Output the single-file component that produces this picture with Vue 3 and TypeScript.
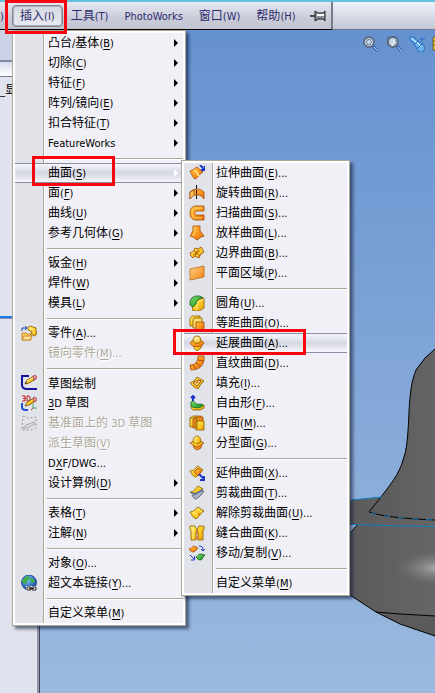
<script setup lang="ts">
interface Shape {
  d: string
  fill?: string
  stroke?: string
  width?: number
  dash?: string
}

interface MenuEntry {
  label?: string
  icon?: string
  more?: boolean
  off?: boolean
  active?: boolean
  children?: MenuEntry[]
}

interface Part {
  text: string
  latin: boolean
  key: boolean
}

const gold = 'url(#gold)'
const amber = 'url(#amber)'
const brown = '#a5480a'
const olive = '#8a5a00'

const icons: Record<string, Shape[]> = {
  part: [
    { d: 'M1 6V3h4M4 1l2 2-2 2', stroke: '#1a3fb0', width: 1 },
    { d: 'M7 2l3-1 2 1 3 1v3l1 3-3 2-3-2 1-2-4-2z', fill: gold, stroke: olive },
    { d: 'M9 3l4 2-1 2 2 1', stroke: '#fff2a0' },
    { d: 'M1 8h4l1 1h4v6H1z', fill: '#f9cf6a', stroke: '#c07b10' },
    { d: 'M1 15l2-4h8l-2 4z', fill: '#ffe39a', stroke: '#c07b10' },
  ],
  sketch: [
    { d: 'M8 1H1v9c0 3 2 4 5 4h10', stroke: '#14149c', width: 2 },
    { d: 'M4 9l2-4 7-4 2 3-7 4z', fill: gold, stroke: '#6b4a10' },
    { d: 'M6 6l7-4', stroke: '#fff3a0' },
    { d: 'M12 1l2-1 2 2-1 2-2 1z', fill: '#ee8f96', stroke: '#a84650' },
    { d: 'M4 9l1-2 1 1z', fill: '#222' },
  ],
  sketch3d: [
    { d: 'M1 1h3v5H1M2 3.5h2M6 1v5h2l1-1V2L8 1z', stroke: '#c01818', width: 1 },
    { d: 'M1 8v4c0 2 1 3 4 3h2', stroke: '#1d50c8', width: 2 },
    { d: 'M4 11l2-4 7-4 2 3-7 4z', fill: gold, stroke: '#6b4a10' },
    { d: 'M12 3l2-1 2 2-1 2-2 1z', fill: '#ee8f96', stroke: '#a84650' },
    { d: 'M12 9v4h4', stroke: '#159b3a' },
    { d: 'M12 13l-2 2', stroke: '#c01818' },
  ],
  plane: [
    { d: 'M2 1l5 2 8-1v11l-6 2H1z', stroke: '#9a9a9a', width: 1, dash: '2 2' },
    { d: 'M2 13l3-3 8-3 1 2-8 4z', fill: '#dcdcdc', stroke: '#9a9a9a' },
  ],
  globe: [
    { d: 'M8 0a7.5 7.5 0 1 0 0 15A7.5 7.5 0 1 0 8 0z', fill: 'url(#globe)', stroke: '#123b8f' },
    { d: 'M4 2l4-1 1 3-3 2v2L3 9 1 6zM10 3l3 1 1 3-3 1-2-2z', fill: '#3fae49' },
    { d: 'M5 11h11v5H5z', fill: '#eee' },
    { d: 'M6 12h4v3H6zM11 12h4v3h-4zM8 13.5h5', stroke: '#222', width: 1 },
  ],
  extrude: [
    { d: 'M1 6c3-1 4-2 7-4l6 5c-3 1-4 5-8 7-2-1-3-4-5-8z', fill: amber, stroke: brown },
    { d: 'M5 5c3 2 4 4 5 6', stroke: '#ffe27a', width: 2 },
    { d: 'M11 0l4 4M12 5h3.500V1', stroke: '#1836c8', width: 2 },
  ],
  revolve: [
    { d: 'M1 14V7c4-4 10-4 14 0v7c-2-3-4-4-5-4H6c-2 0-4 1-5 4z', fill: amber, stroke: brown },
    { d: 'M1 14V7l4-2v5z', fill: '#ffc95a', stroke: brown },
    { d: 'M7.500 0v15', stroke: '#111', width: 1, dash: '4 1' },
  ],
  sweep: [
    { d: 'M15 1H7C3 1 1 4 1 8s2 7 6 7h8v-5H8c-3 0-3-4 0-4h7z', fill: amber, stroke: brown },
    { d: 'M13 3H7C4 3 3 5 3 8s1 5 4 5h6', stroke: '#ffd35a', width: 1 },
  ],
  loft: [
    { d: 'M4 1h7v5l4 5-3 1-4 3-4-3-3-1 3-5z', fill: amber, stroke: brown },
    { d: 'M6 2v5l-2 4', stroke: '#ffe08a' },
  ],
  boundary: [
    { d: 'M1 8l4-2 1-3 3 1 3-2 3 5-3 2-2 4-4-2-2 2-2-2z', fill: gold, stroke: brown },
    { d: 'M5 6l6 5M9 4l-3 7M4 10l8-5', stroke: '#a04a00' },
    { d: 'M7 5l1 1M4 9l1-1M11 5l1 2M8 10l1 1', stroke: '#fff07a', width: 1 },
  ],
  planar: [{ d: 'M1 4l14-3v11L1 15z', fill: 'url(#sheet)', stroke: '#b86a18' }],
  fillet: [
    { d: 'M3 10l5-5 7-2v10l-5 3H4z', fill: gold, stroke: olive },
    { d: 'M8 15V8l7-4', stroke: '#fff3a0' },
    { d: 'M1 8c0-4 3-7 7-7h3l3 2c-4 0-6 2-7 6l-3 3-3-2z', fill: 'url(#green)', stroke: '#14601c' },
  ],
  offset: [
    { d: 'M1 3l2-2h8v8L9 11H1z', fill: gold, stroke: olive },
    { d: 'M4 5l1-2h8v8l-1 2H4z', fill: '#ffd96a', stroke: olive },
    { d: 'M7 7h8v8H7z', fill: amber, stroke: brown },
  ],
  radiate: [
    { d: 'M4 9h9l-1 4-4 3-3-3z', fill: gold, stroke: olive },
    { d: 'M1 8c2-4 12-4 14 0-2 5-12 5-14 0z', fill: amber, stroke: brown },
    { d: 'M4 6c0-3 1-5 4-5s4 2 4 5c-1 3-7 3-8 0z', fill: 'url(#ball)', stroke: olive },
  ],
  ruled: [
    { d: 'M9 1h6v4c-1 6-5 10-13 10l-1-5c5 0 8-3 8-9z', fill: amber, stroke: brown },
    { d: 'M9 5l6 1M7 8l5 4M4 10l3 4', stroke: '#a8520c', width: 1 },
  ],
  fill: [
    { d: 'M1 8l4-2 3-4 7 4-3 3-3 5-4-2z', fill: gold, stroke: olive },
    { d: 'M4 8l5-3 3 1-4 5z', fill: '#fff0a0', stroke: '#6b3000' },
    { d: 'M6 8l3-2 1 1-3 2z', fill: '#e86a10' },
  ],
  freeform: [
    { d: 'M4 6V1M2 3l2-2 2 2', stroke: '#1836c8', width: 2 },
    { d: 'M2 11l13-1v3l-4 2H4l-2-2z', fill: gold, stroke: olive },
    { d: 'M2 7c2-2 4 0 5 2 3 1 5-1 7 1 0 3-10 4-12 1z', fill: 'url(#green)', stroke: '#14601c' },
  ],
  mid: [
    { d: 'M1 3l3-2h8v8l-3 3H1z', fill: gold, stroke: olive },
    { d: 'M4 4l2-2h8v9l-2 2H4z', fill: '#e88a1a', stroke: brown },
    { d: 'M7 6h8v9H7z', fill: gold, stroke: olive },
    { d: 'M1 3h6l1 3v8', stroke: olive },
  ],
  parting: [
    { d: 'M4 9h9l-1 4-4 2-3-2z', fill: amber, stroke: brown },
    { d: 'M1 8l6-3h2l6 3-6 4H7z', fill: gold, stroke: brown },
    { d: 'M4 7c0-4 2-6 4-6s4 2 4 6c-2 2-6 2-8 0z', fill: gold, stroke: olive },
    { d: 'M7 2v7', stroke: '#fff6a0' },
  ],
  extend: [
    { d: 'M1 6c4 0 5-3 8-5l5 4c-3 1-4 5-7 7-3 0-4-3-6-6z', fill: gold, stroke: olive },
    { d: 'M5 7l4 4 4-5-4-3z', fill: amber, stroke: brown },
    { d: 'M10 9l5 5M15 11v4h-4', stroke: '#2038c8', width: 2 },
  ],
  trim: [
    { d: 'M1 7c4 0 5-3 8-6l5 3c-3 1-4 4-7 5z', fill: gold, stroke: olive },
    { d: 'M3 10c5 0 6-4 12-4-2 3-4 6-8 8-2 0-3-2-4-4z', fill: '#a9b0c0', stroke: '#555b6b' },
    { d: 'M2 8c5 2 7-2 12-3', stroke: '#2864d8', width: 1 },
  ],
  untrim: [
    { d: 'M1 7c4 0 5-3 8-5l6 4c-3 1-5 6-8 8-3-1-4-4-6-7z', fill: gold, stroke: olive },
    { d: 'M4 7c3 1 4 3 4 5M9 3c1 2 2 3 4 4', stroke: '#fff3a0' },
    { d: 'M9 8l3 1-3 4z', fill: '#e08a10' },
  ],
  knit: [
    { d: 'M1 1h5l2 4 2-4h5v3l-1 2v9H9V7L8 6 7 7v8H2V6L1 4z', fill: gold, stroke: olive },
    { d: 'M8 5v10', stroke: '#e02a10', width: 1, dash: '1 1' },
    { d: 'M4 2v12', stroke: '#fff3a0' },
  ],
  move: [
    { d: 'M0 4c2 0 3-2 5-3l4 2c-2 1-2 3-4 4-2 0-4-1-5-3z', fill: amber, stroke: brown },
    { d: 'M7 12c2 0 2-3 4-3l5 1c-2 1-2 4-4 5-2 0-4-1-5-3z', fill: 'url(#green)', stroke: '#14601c' },
    { d: 'M10 1c3 0 4 1 4 4M12 4l2 2 2-2M1 10l4 4M5.500 11v4H2', stroke: '#2038c8', width: 1 },
  ],
  zoomFit: [
    { d: 'M10 10l5 5', stroke: '#3765bc', width: 3 },
    { d: 'M11 11l4 4', stroke: '#b5dcff', width: 1 },
    { d: 'M6 1a5 5 0 1 0 0 10A5 5 0 1 0 6 1z', fill: '#c6d5e6', stroke: '#5d6c84', width: 2 },
    { d: 'M4 4h1M7 4h1M4 8h1M7 8h1M6 3v1M6 8v1M3 6h1M8 6h1', stroke: '#333d4e', width: 1 },
  ],
  zoomArea: [
    { d: 'M11 10l4 5', stroke: '#3765bc', width: 3 },
    { d: 'M12 11l3 4', stroke: '#b5dcff', width: 1 },
    { d: 'M7 1a5 5 0 1 0 0 10A5 5 0 1 0 7 1z', fill: '#c6d5e6', stroke: '#5d6c84', width: 2 },
    { d: 'M1 1h9v8H1z', stroke: '#56606e', dash: '2 1' },
    { d: 'M8 4v4M5 9h3', stroke: '#fff', width: 1 },
  ],
  spyglass: [
    { d: 'M1 1h3l6 5 4 2 2 4-2 4h-4l-3-5L4 6 1 4z', fill: '#69b4f0', stroke: '#1a56a8' },
    { d: 'M2 2l8 6 2 3', stroke: '#e4f5ff', width: 1 },
    { d: 'M6 8l3-3M9 12l4-4', stroke: '#1a56a8' },
    { d: 'M16 3h-5M13 1l-2 2 2 2', stroke: '#2a6fd0', width: 1 },
  ],
  section: [
    { d: 'M1 1h14v13H1z', fill: '#e8c437', stroke: '#5e5320' },
    { d: 'M1 5h14M1 9h14', stroke: '#5e5320' },
  ],
}

const surfaces: MenuEntry[] = [
  { label: '拉伸曲面(&E)...', icon: 'extrude' },
  { label: '旋转曲面(&R)...', icon: 'revolve' },
  { label: '扫描曲面(&S)...', icon: 'sweep' },
  { label: '放样曲面(&L)...', icon: 'loft' },
  { label: '边界曲面(&B)...', icon: 'boundary' },
  { label: '平面区域(&P)...', icon: 'planar' },
  {},
  { label: '圆角(&U)...', icon: 'fillet' },
  { label: '等距曲面(&O)...', icon: 'offset' },
  { label: '延展曲面(&A)...', icon: 'radiate', active: true },
  { label: '直纹曲面(&D)...', icon: 'ruled' },
  { label: '填充(&I)...', icon: 'fill' },
  { label: '自由形(&F)...', icon: 'freeform' },
  { label: '中面(&M)...', icon: 'mid' },
  { label: '分型面(&G)...', icon: 'parting' },
  {},
  { label: '延伸曲面(&X)...', icon: 'extend' },
  { label: '剪裁曲面(&T)...', icon: 'trim' },
  { label: '解除剪裁曲面(&U)...', icon: 'untrim' },
  { label: '缝合曲面(&K)...', icon: 'knit' },
  { label: '移动/复制(&V)...', icon: 'move' },
  {},
  { label: '自定义菜单(&M)' },
]

const insertMenu: MenuEntry[] = [
  { label: '凸台/基体(&B)', more: true },
  { label: '切除(&C)', more: true },
  { label: '特征(&F)', more: true },
  { label: '阵列/镜向(&E)', more: true },
  { label: '扣合特征(&T)', more: true },
  { label: 'FeatureWorks', more: true },
  {},
  { label: '曲面(&S)', more: true, active: true, children: surfaces },
  { label: '面(&F)', more: true },
  { label: '曲线(&U)', more: true },
  { label: '参考几何体(&G)', more: true },
  {},
  { label: '钣金(&H)', more: true },
  { label: '焊件(&W)', more: true },
  { label: '模具(&L)', more: true },
  {},
  { label: '零件(&A)...', icon: 'part' },
  { label: '镜向零件(&M)...', off: true },
  {},
  { label: '草图绘制', icon: 'sketch' },
  { label: '&3D 草图', icon: 'sketch3d' },
  { label: '基准面上的 3D 草图', icon: 'plane', off: true },
  { label: '派生草图(&V)', off: true },
  { label: 'D&XF/DWG...' },
  { label: '设计算例(&D)', more: true },
  {},
  { label: '表格(&T)', more: true },
  { label: '注解(&N)', more: true },
  {},
  { label: '对象(&O)...' },
  { label: '超文本链接(&Y)...', icon: 'globe' },
  {},
  { label: '自定义菜单(&M)' },
]

const bar: string[] = [')', '插入(I)', '工具(T)', 'PhotoWorks', '窗口(W)', '帮助(H)']
const viewTools: string[] = ['zoomFit', 'zoomArea', 'spyglass', 'section']

// Splits a label into Latin and Chinese runs; "&" marks the access key.
function parts(label: string): Part[] {
  return (label.match(/&.|[\x20-\x25\x27-\x7e]+|[^\x20-\x7e]+/g) ?? []).map((run) => {
    const key = run.startsWith('&')
    const text = key ? run.slice(1) : run
    return { text, key, latin: /^[\x20-\x7e]/.test(text) }
  })
}
</script>

<template>
  <div class="app">
    <svg class="defs" aria-hidden="true">
      <defs>
        <linearGradient id="gold" x1="0" y1="0" x2="1" y2="1">
          <stop offset="0" stop-color="#fff27a" />
          <stop offset="0.5" stop-color="#fccb25" />
          <stop offset="1" stop-color="#e59a08" />
        </linearGradient>
        <linearGradient id="amber" x1="0" y1="0" x2="1" y2="1">
          <stop offset="0" stop-color="#ffc13c" />
          <stop offset="0.5" stop-color="#fb9a22" />
          <stop offset="1" stop-color="#e06c06" />
        </linearGradient>
        <linearGradient id="sheet" x1="0" y1="0" x2="1" y2="1">
          <stop offset="0" stop-color="#ffd08a" />
          <stop offset="1" stop-color="#f5820f" />
        </linearGradient>
        <linearGradient id="green" x1="0" y1="0" x2="1" y2="1">
          <stop offset="0" stop-color="#7be06a" />
          <stop offset="1" stop-color="#118a22" />
        </linearGradient>
        <radialGradient id="ball" cx="0.4" cy="0.3" r="0.7">
          <stop offset="0" stop-color="#fffbc0" />
          <stop offset="1" stop-color="#f5b416" />
        </radialGradient>
        <radialGradient id="globe" cx="0.4" cy="0.3" r="0.7">
          <stop offset="0" stop-color="#7fd0ff" />
          <stop offset="1" stop-color="#123f9e" />
        </radialGradient>
      </defs>
    </svg>

    <header class="top">
      <nav class="bar">
        <ul class="bar-list">
          <li v-for="(name, i) in bar" :key="name" class="bar-item">
            <button type="button" class="bar-button" :class="{ cut: i === 0, open: i === 1 }">
              <span v-for="(p, k) in parts(name)" :key="k" :class="{ latin: p.latin }">{{ p.text }}</span>
            </button>
            <template v-if="i === 1">
              <span class="mark mark-bar"></span>
              <ul class="menu main-menu">
                <li
                  v-for="(row, r) in insertMenu"
                  :key="r"
                  :class="row.label ? 'row' : 'rule'"
                >
                  <button
                    v-if="row.label"
                    type="button"
                    class="entry"
                    :class="{ active: row.active }"
                    :disabled="row.off"
                  >
                    <span class="slot">
                      <svg v-if="row.icon" class="icon" viewBox="0 0 16 16" aria-hidden="true">
                        <path
                          v-for="(s, n) in icons[row.icon]"
                          :key="n"
                          :d="s.d"
                          :fill="s.fill ?? 'none'"
                          :stroke="s.stroke"
                          :stroke-width="s.width ?? 0.8"
                          :stroke-dasharray="s.dash"
                        />
                      </svg>
                    </span>
                    <span class="label"><span
                      v-for="(p, k) in parts(row.label)"
                      :key="k"
                      :class="{ latin: p.latin, key: p.key }"
                    >{{ p.text }}</span></span>
                    <svg v-if="row.more" class="arrow" viewBox="0 0 4 8" aria-hidden="true">
                      <path d="M0 0l4 4-4 4z" fill="currentColor" />
                    </svg>
                  </button>
                  <template v-if="row.children">
                    <ul class="menu sub-menu">
                      <li
                        v-for="(item, c) in row.children"
                        :key="c"
                        :class="item.label ? 'row' : 'rule'"
                      >
                        <button
                          v-if="item.label"
                          type="button"
                          class="entry"
                          :class="{ active: item.active }"
                        >
                          <span class="slot">
                            <svg v-if="item.icon" class="icon" viewBox="0 0 16 16" aria-hidden="true">
                              <path
                                v-for="(s, n) in icons[item.icon]"
                                :key="n"
                                :d="s.d"
                                :fill="s.fill ?? 'none'"
                                :stroke="s.stroke"
                                :stroke-width="s.width ?? 0.8"
                                :stroke-dasharray="s.dash"
                              />
                            </svg>
                          </span>
                          <span class="label"><span
                            v-for="(p, k) in parts(item.label)"
                            :key="k"
                            :class="{ latin: p.latin, key: p.key }"
                          >{{ p.text }}</span></span>
                        </button>
                        <span v-if="item.active" class="mark mark-item"></span>
                      </li>
                    </ul>
                    <span class="mark mark-group"></span>
                  </template>
                </li>
              </ul>
            </template>
          </li>
        </ul>
        <button type="button" class="pin" aria-label="固定">
          <svg class="icon" viewBox="0 0 16 12" aria-hidden="true">
            <path d="M0 6h5" stroke="#222" stroke-width="1.500" />
            <path d="M5 1l3 2h5l2-2v10l-2-2H8l-3 2z" fill="#8c8c94" stroke="#222" />
            <path d="M7 5h7" stroke="#fff" stroke-width="2" />
          </svg>
        </button>
      </nav>
    </header>

    <main class="work">
      <aside class="side">
        <div class="side-tabs"></div>
        <div class="side-head"></div>
        <div class="side-tree"><span class="latin">_</span>显</div>
        <div class="side-rest"></div>
      </aside>
      <section class="view">
        <svg class="model" aria-hidden="true">
          <defs>
            <linearGradient id="body" x1="0" y1="0" x2="1" y2="0">
              <stop offset="0" stop-color="#5a5a5a" />
              <stop offset="1" stop-color="#6a6a6a" />
            </linearGradient>
            <radialGradient id="shine">
              <stop offset="0" stop-color="#acacac" />
              <stop offset="0.5" stop-color="#8a8a8a" stop-opacity="0.6" />
              <stop offset="1" stop-color="#707070" stop-opacity="0" />
            </radialGradient>
          </defs>
          <g transform="translate(-40 -30)">
            <path d="M340 501L382 497 470 497V640L435 636 400 624 376 612 350 595 340 580z" fill="url(#body)" />
            <path d="M350 525H357L350 533z" fill="#a3c0e8" />
            <path d="M357 525L350 533" stroke="#000" fill="none" />
            <path d="M376 612L470 619V650L435 636 400 624z" fill="#5b5b5b" />
            <ellipse cx="438" cy="568" rx="44" ry="17" fill="url(#shine)" />
            <path d="M340 588L350 595 376 612 400 624 435 636 470 648M376 612L400 614 470 618" stroke="#000" fill="none" />
            <path
              d="M470 330L435 349 425 358 416 370C411 382 410 395 409 412 408 435 407 450 403 460 399 475 390 485 377 502L369 512Q385 518 435 520L470 520z"
              fill="url(#body)"
            />
            <path
              d="M470 330L435 349 425 358 416 370C411 382 410 395 409 412 408 435 407 450 403 460 399 475 390 485 377 502L369 512Q385 518 435 520"
              stroke="#000"
              fill="none"
            />
            <path d="M340 501L382 497M340 524L400 526 470 527" stroke="#0f7fc4" fill="none" />
            <path d="M371 513Q388 518 435 520" stroke="#0f7fc4" stroke-dasharray="6 8" fill="none" />
          </g>
        </svg>
        <div class="view-tools">
          <button v-for="tool in viewTools" :key="tool" type="button" class="tool" :aria-label="tool">
            <svg class="icon" viewBox="0 0 16 16" aria-hidden="true">
              <path
                v-for="(s, n) in icons[tool]"
                :key="n"
                :d="s.d"
                :fill="s.fill ?? 'none'"
                :stroke="s.stroke"
                :stroke-width="s.width ?? 0.8"
                :stroke-dasharray="s.dash"
              />
            </svg>
          </button>
        </div>
      </section>
    </main>
  </div>
</template>

<style>
body {
  margin: 0;
}
</style>

<style scoped>
.app {
  display: flex;
  flex-direction: column;
  min-height: 100vh;
  overflow: hidden;
  font-family: "DejaVu Sans Condensed", "Noto Sans CJK SC", sans-serif;
  font-size: 12px;
  line-height: 20px;
  color: #000;
}

.defs {
  position: absolute;
  width: 0;
  height: 0;
}

ul {
  margin: 0;
  padding: 0;
  list-style: none;
}

button {
  margin: 0;
  padding: 0;
  border: 0;
  background: none;
  font: inherit;
  color: inherit;
  text-align: left;
}

.latin {
  font-size: 11px;
}

.key {
  text-decoration: underline;
  text-underline-offset: 2px;
}

.icon {
  display: block;
  width: 16px;
  height: 16px;
}

.top {
  position: relative;
  z-index: 1;
  display: flex;
  box-sizing: border-box;
  height: 30px;
  border-top: 2px solid #62c3dc;
  border-bottom: 1px solid #70758a;
  background: linear-gradient(#eef2f9, #c3c6d4);
}

.bar {
  display: flex;
  align-items: center;
  box-sizing: border-box;
  height: 28px;
  padding-right: 5px;
  border-right: 2px solid #777a88;
  border-bottom: 1px solid #000;
  background: linear-gradient(#e6e9f3, #c9cbd8 60%, #c2c4d0);
  color: #2c2c6c;
}

.bar-list {
  display: flex;
}

.bar-item {
  position: relative;
}

.bar-button {
  display: block;
  box-sizing: border-box;
  height: 22px;
  padding: 0 7px;
  border: 1px solid transparent;
  white-space: nowrap;
}

.bar-button.cut {
  width: 12px;
  padding: 0 7px 0 0;
  border-left: 0;
}

.bar-button.open {
  border: 1px solid #858794;
  border-radius: 4px;
  background: linear-gradient(#d5d7e0, #e9eaf0);
  box-shadow: inset 0 0 0 1px #a9abb7;
}

.pin {
  padding-left: 6px;
}

.mark {
  position: absolute;
  z-index: 3;
  box-sizing: border-box;
  border: 3px solid #fb0410;
  pointer-events: none;
}

.mark-bar {
  inset: -5px -4px -7px -7px;
}

.mark-group {
  top: -7px;
  bottom: -3px;
  left: 17px;
  width: 83px;
}

.mark-item {
  top: -4px;
  bottom: -2px;
  left: -11px;
  width: 133px;
}

.menu {
  position: absolute;
  z-index: 2;
  box-sizing: border-box;
  padding: 2px;
  border: 1px solid #aca899;
  background:
    linear-gradient(90deg, #e1e3e8 28px, #aca899 28px, #aca899 29px, #fff 29px, #fff 30px, #f1f0f7 30px)
      content-box,
    #fff;
  box-shadow: 3px 3px 3px rgba(20, 30, 60, 0.6);
  color: #000;
}

.main-menu {
  top: 25px;
  left: 0;
  width: 174px;
}

.sub-menu {
  top: -3px;
  left: calc(100% - 2px);
  width: 169px;
}

.row {
  position: relative;
}

.entry {
  display: flex;
  align-items: center;
  box-sizing: border-box;
  width: 100%;
  height: 20px;
  padding-right: 5px;
  white-space: nowrap;
}

.slot {
  flex: none;
  width: 22px;
  padding-left: 6px;
}

.label {
  flex: 1;
  padding-top: 2px;
  padding-left: 5px;
}

.sub-menu .slot {
  padding-left: 5px;
}

.arrow {
  width: 4px;
  height: 8px;
}

.entry.active {
  border-top: 1px solid #8a8da6;
  border-bottom: 1px solid #8a8da6;
  background: linear-gradient(#f6f6fa, #d5d7e2 50%, #f6f6fa);
}

.entry.active .arrow {
  color: #fff;
}

.entry:disabled {
  color: #aca899;
  text-shadow: 1px 1px 0 #fff;
}

.rule {
  box-sizing: border-box;
  height: 10px;
  margin-left: 32px;
  padding-top: 5px;
}

.rule::before {
  display: block;
  height: 1px;
  border-bottom: 1px solid #fff;
  background: #aca899;
  content: "";
}

.work {
  display: flex;
  flex: 1;
}

.side {
  display: flex;
  flex: none;
  flex-direction: column;
  width: 37px;
  border-right: 2px solid #9498a8;
  background: #e0e3ed;
}

.side-tabs {
  height: 30px;
  border-bottom: 2px solid #8088a0;
  background: #ccd1e6;
}

.side-head {
  height: 14px;
  border-bottom: 1px solid #777c90;
  background: linear-gradient(#d8dcec, #fff);
}

.side-tree {
  height: 239px;
  border-bottom: 2px solid #1e7be8;
  line-height: 26px;
}

.side-rest {
  flex: 1;
  border-top: 1px solid #8a90a8;
}

.view {
  position: relative;
  flex: 1;
  min-width: 0;
  overflow: hidden;
  border-left: 1px solid #3b4560;
  background: linear-gradient(#6592d0, #9cb9de);
}

.model {
  position: absolute;
  inset: 0;
  width: 100%;
  height: 100%;
}

.view-tools {
  position: relative;
  display: flex;
  gap: 7px;
  padding: 6px 0 0 323px;
}
</style>
